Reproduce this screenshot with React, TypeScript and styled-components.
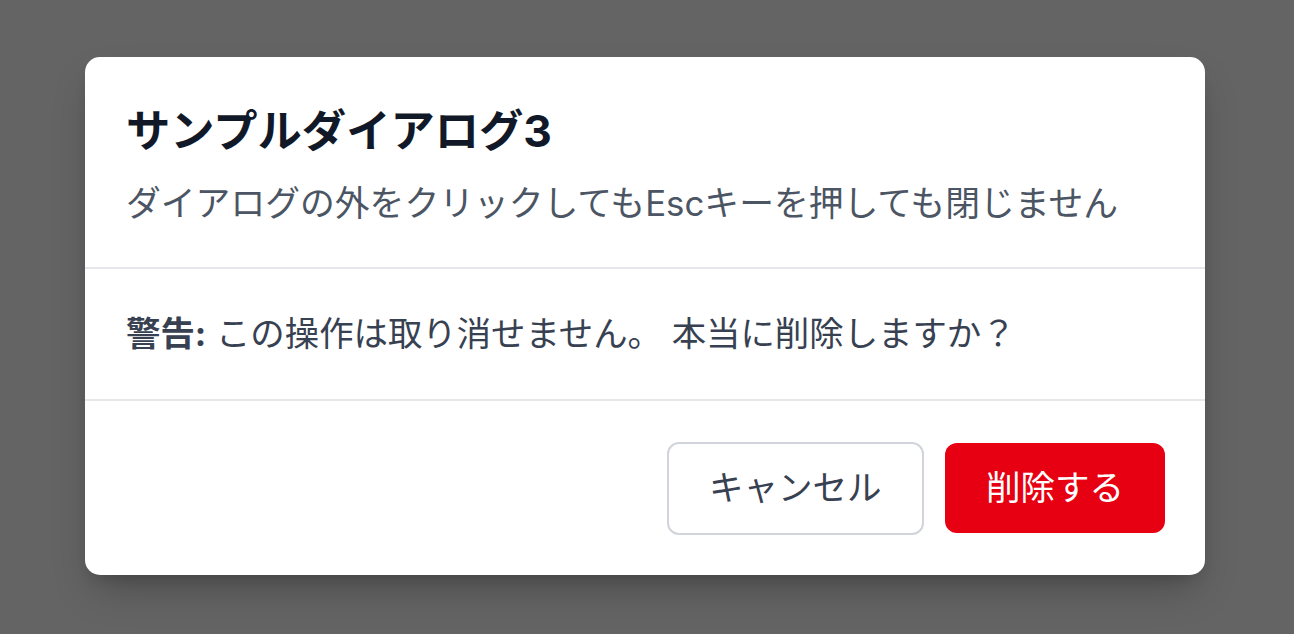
import styled, { createGlobalStyle } from "styled-components";

const GlobalStyle = createGlobalStyle`
  html, body {
    margin: 0;
    padding: 0;
    height: 100%;
  }
  body {
    font-family: Inter, "Noto Sans CJK JP", sans-serif;
    background: #636463;
  }
  #root {
    height: 100%;
  }
`;

const Backdrop = styled.div`
  height: 100vh;
  display: flex;
  align-items: center;
  justify-content: center;
  padding: 0 4px 3px 0;
  box-sizing: border-box;
`;

const Panel = styled.div`
  width: 1120px;
  background: #ffffff;
  border-radius: 15px;
  box-shadow: 0 20px 40px -10px rgba(0, 0, 0, 0.28),
    0 8px 16px -8px rgba(0, 0, 0, 0.2);
  overflow: hidden;
`;

const Header = styled.div`
  padding: 44px 41px 38px;
  border-bottom: 2px solid #e5e7eb;
  display: flex;
  flex-direction: column;
  gap: 15px;
`;

const Title = styled.h2`
  margin: 0;
  font-size: 44.3px;
  line-height: 61px;
  font-weight: 700;
  color: #111827;
`;

const Subtitle = styled.p`
  margin: 0;
  font-size: 34.8px;
  line-height: 52px;
  color: #4b5563;
`;

const Body = styled.div`
  padding: 39px 41px 39px;
  border-bottom: 2px solid #e5e7eb;
  font-size: 34.4px;
  line-height: 52px;
  color: #374151;
`;

const Strong = styled.strong`
  font-weight: 700;
`;

const Footer = styled.div`
  padding: 41px 40px 40px;
  display: flex;
  justify-content: flex-end;
  align-items: center;
  gap: 21px;
`;

const Button = styled.button<{ $variant: "outline" | "danger" }>`
  font-family: inherit;
  font-size: 34.5px;
  line-height: 1;
  padding: ${({ $variant }) => ($variant === "outline" ? "0 40.5px" : "0 41px")};
  border-radius: 12px;
  cursor: pointer;
  box-sizing: border-box;
  height: ${({ $variant }) => ($variant === "outline" ? "93px" : "90px")};
  background: ${({ $variant }) => ($variant === "outline" ? "#ffffff" : "#e60012")};
  color: ${({ $variant }) => ($variant === "outline" ? "#374151" : "#ffffff")};
  border: ${({ $variant }) => ($variant === "outline" ? "2px solid #d1d5db" : "none")};
`;

export default function App() {
  return (
    <>
      <GlobalStyle />
      <Backdrop>
        <Panel role="dialog">
          <Header>
            <Title>サンプルダイアログ3</Title>
            <Subtitle>ダイアログの外をクリックしてもEscキーを押しても閉じません</Subtitle>
          </Header>
          <Body>
            <Strong>警告:</Strong> この操作は取り消せません。 本当に削除しますか？
          </Body>
          <Footer>
            <Button $variant="outline">キャンセル</Button>
            <Button $variant="danger">削除する</Button>
          </Footer>
        </Panel>
      </Backdrop>
    </>
  );
}
